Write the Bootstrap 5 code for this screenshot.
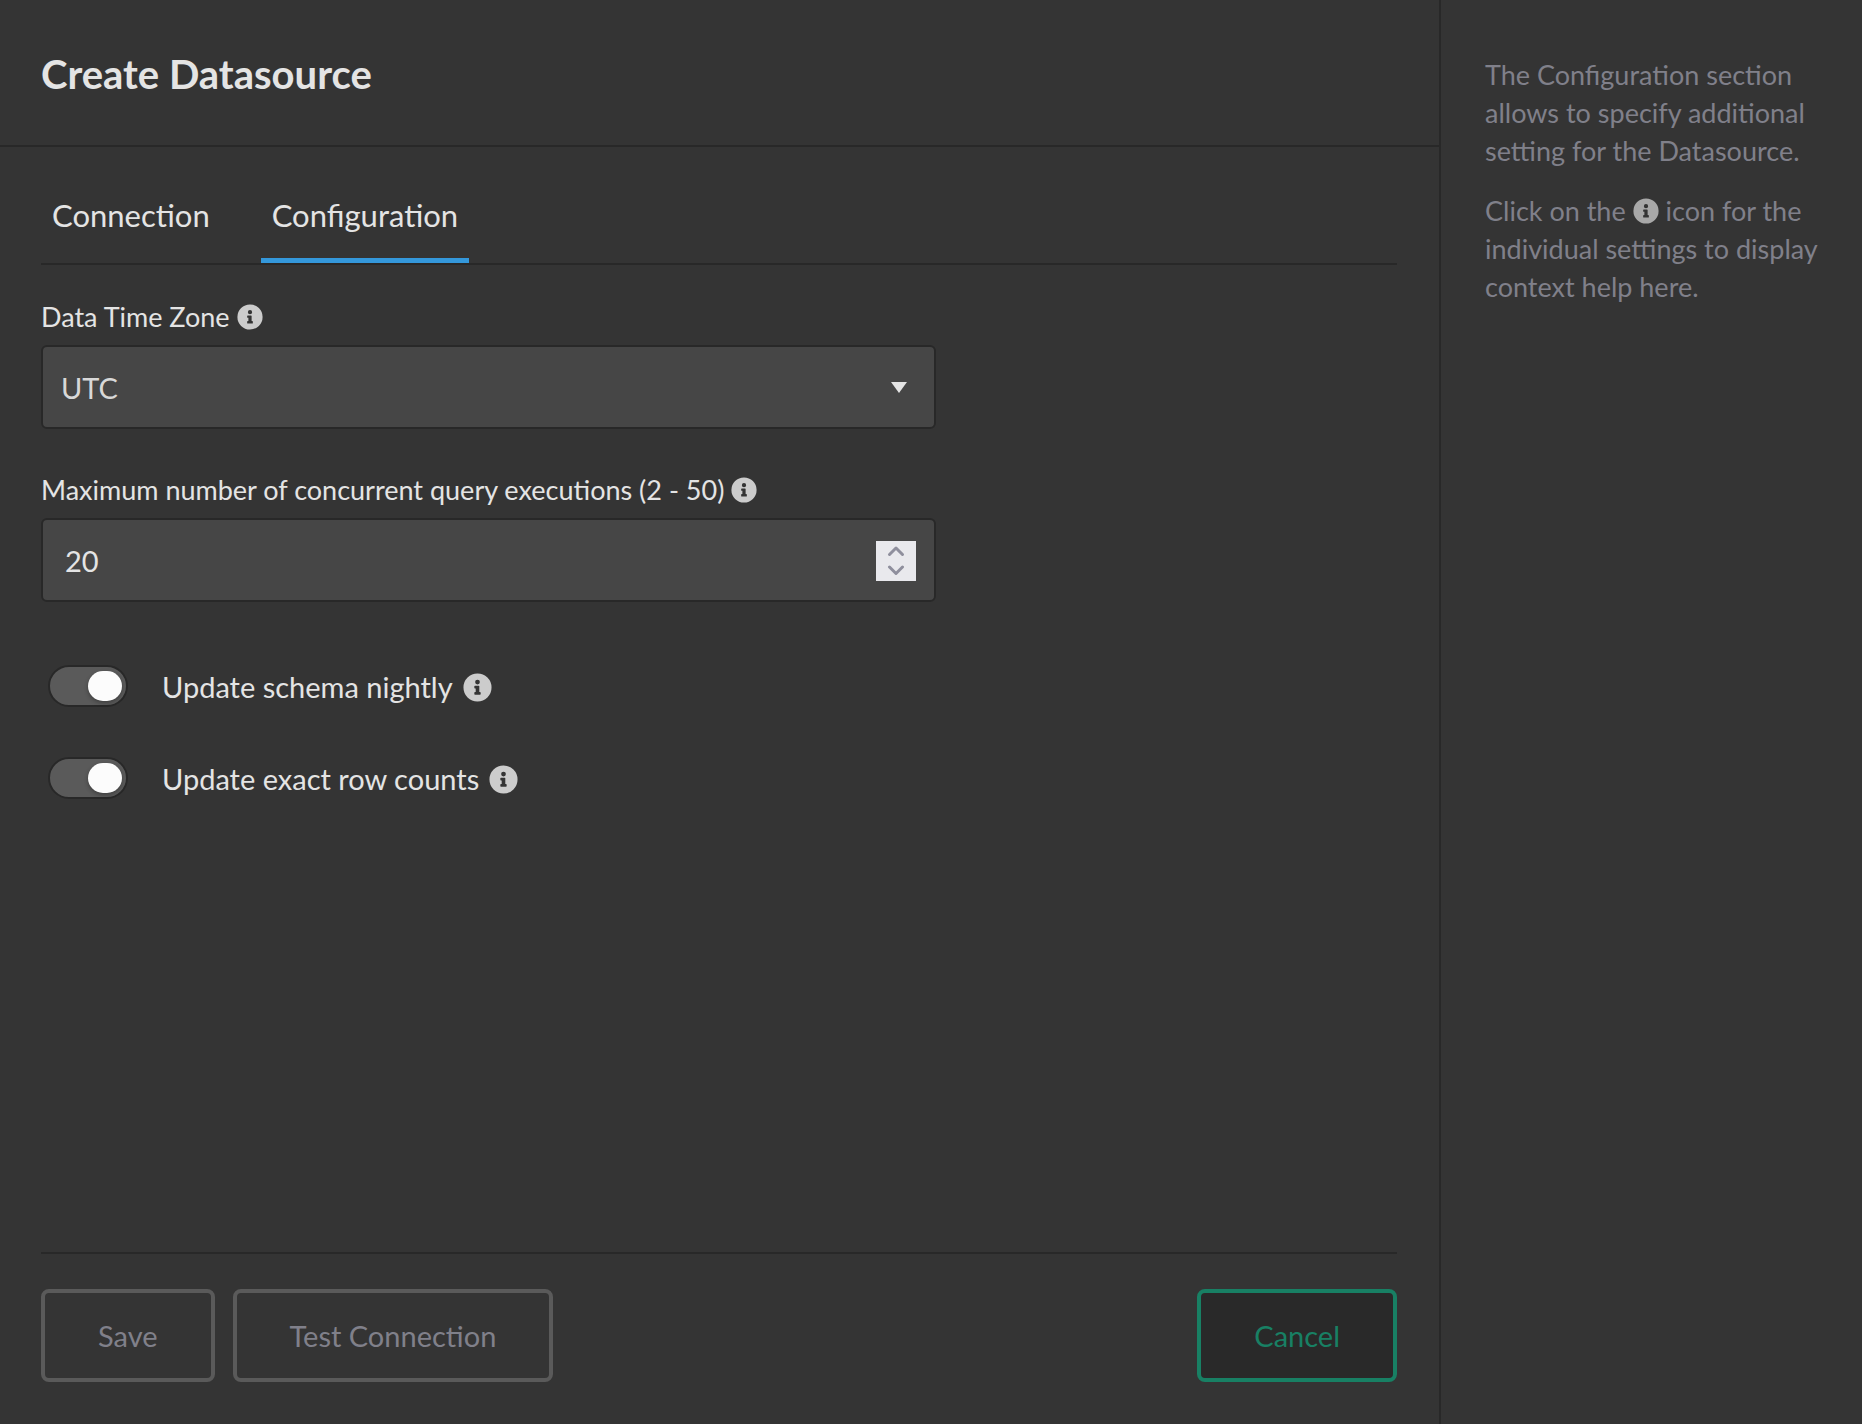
<!DOCTYPE html>
<html lang="en">
<head>
<meta charset="utf-8">
<meta name="viewport" content="width=device-width, initial-scale=1">
<title>Create Datasource</title>
<link href="https://cdn.jsdelivr.net/npm/bootstrap@5.3.0/dist/css/bootstrap.min.css" rel="stylesheet">
<style>
  :root { --ds-bg: #343434; --ds-line: #282828; --ds-text: #e4e4e4; --ds-muted: #80808a; --ds-field: #464646; }
  body { background: var(--ds-bg); color: var(--ds-text); font-family: Lato, sans-serif; font-size: 27px; line-height: 38px; }
  .ds-header { border-bottom: 2px solid var(--ds-line); padding: 49px 41px 46px; }
  .ds-title { font-size: 40px; line-height: 50px; font-weight: 700; }
  .ds-body { padding: 40px 42px 40px 41px; }
  .ds-tabs { border-bottom: 2px solid var(--ds-line); gap: 40px; }
  .ds-tabs .nav-link { border: 0; border-bottom: 5px solid transparent; border-radius: 0; margin: 0; padding: 8px 11px 23px; font-size: 31px; line-height: 40px; color: var(--ds-text); background: none; }
  .ds-tabs .nav-link.active { color: var(--ds-text); background: none; border-bottom-color: #3498db; }
  .ds-form { width: 66%; padding-top: 33px; }
  .ds-label { display: block; margin-bottom: 9px; }
  .ds-field { height: 84px; background-color: var(--ds-field); border: 2px solid var(--ds-line); border-radius: 6px; margin-bottom: 42px; font-size: 29px; color: #d8d8d8; }
  select.ds-field { padding: 2px 18px 0; background-image: url("data:image/svg+xml,%3Csvg xmlns='http://www.w3.org/2000/svg' viewBox='0 0 16 11'%3E%3Cpath fill='%23e4e4e4' d='M0 0h16L8 11z'/%3E%3C/svg%3E"); background-size: 16px 11px; background-position: right 27px center; }
  .ds-number { padding: 2px 18px 0 22px; }
  .ds-number input { border: 0; background: none; color: var(--ds-text); outline: 0; min-width: 0; padding: 0; appearance: textfield; }
  .ds-number input::-webkit-inner-spin-button { display: none; }
  .ds-spin { width: 40px; height: 40px; background: #e9e9ed; }
  .ds-spin button { border: 0; background: none; padding: 0; height: 20px; line-height: 0; }
  .ds-spin path { fill: none; stroke: #8f8f9d; stroke-width: 3; stroke-linecap: round; stroke-linejoin: round; }
  .ds-icon { width: 26px; height: 26px; vertical-align: -3px; fill: #cccccc; }
  .ds-switches { padding: 21px 0 0 7px; }
  .ds-switch { gap: 34px; height: 42px; margin-bottom: 50px; font-size: 29px; }
  .ds-switch label { padding-top: 2px; }
  .ds-switch .ds-icon { width: 29px; height: 29px; margin-left: 10px; vertical-align: -4px; }
  .ds-switch .form-check-input { width: 80px; height: 42px; margin: 0; border: 2px solid var(--ds-line); background: #5a5a5a; border-radius: 21px; display: flex; align-items: center; justify-content: flex-end; padding-right: 4px; }
  .ds-switch .form-check-input::before { content: ""; width: 34px; height: 30px; border-radius: 15px; background: #fcfcfc; box-shadow: 0 2px 4px rgba(0,0,0,.3); }
  .ds-footer { margin: 0 42px 42px 41px; padding-top: 35px; border-top: 2px solid var(--ds-line); gap: 18px; }
  .ds-btn { border: 4px solid #5a5a5a; border-radius: 8px; padding: 23px 53px 22px; font-size: 29px; line-height: 40px; color: var(--ds-muted); background: var(--ds-bg); }
  .ds-cancel { border-color: #188064; color: #188064; background: #292929; }
  .ds-help { flex: 0 0 423px; border-left: 2px solid var(--ds-line); padding: 56px 40px 56px 44px; color: var(--ds-muted); }
  .ds-help p { margin-bottom: 22px; }
  .ds-help .ds-icon { fill: #a8a8a8; }
</style>
<script src="https://cdn.jsdelivr.net/npm/bootstrap@5.3.0/dist/js/bootstrap.bundle.min.js"></script>
</head>
<body>
<svg class="d-none" aria-hidden="true">
  <symbol id="info" viewBox="0 0 512 512"><path d="M256 8a248 248 0 1 0 0 496 248 248 0 0 0 0-496zm0 110a42 42 0 1 1 0 84 42 42 0 0 1 0-84zm56 254a12 12 0 0 1-12 12h-88a12 12 0 0 1-12-12v-24a12 12 0 0 1 12-12h12v-64h-12a12 12 0 0 1-12-12v-24a12 12 0 0 1 12-12h64a12 12 0 0 1 12 12v100h12a12 12 0 0 1 12 12z"/></symbol>
</svg>
<div class="d-flex min-vh-100">
  <main class="d-flex flex-column flex-grow-1">
    <header class="ds-header"><h1 class="ds-title m-0">Create Datasource</h1></header>
    <div class="ds-body flex-grow-1">
      <ul class="nav nav-tabs ds-tabs" role="tablist">
        <li class="nav-item" role="presentation"><button class="nav-link" type="button" role="tab" aria-selected="false">Connection</button></li>
        <li class="nav-item" role="presentation"><button class="nav-link active" type="button" role="tab" aria-selected="true">Configuration</button></li>
      </ul>
      <form class="ds-form">
        <label class="ds-label" for="tz">Data Time Zone <svg class="ds-icon"><use href="#info"/></svg></label>
        <select class="form-select ds-field" id="tz"><option>UTC</option></select>
        <label class="ds-label" for="maxq">Maximum number of concurrent query executions (2 - 50) <svg class="ds-icon"><use href="#info"/></svg></label>
        <div class="ds-field ds-number d-flex align-items-center">
          <input class="flex-grow-1" id="maxq" type="number" min="2" max="50" value="20">
          <div class="ds-spin d-flex flex-column">
            <button type="button" aria-label="Increase"><svg width="18" height="12" viewBox="0 0 18 12"><path d="M2.500 9.500 9 3 15.500 9.500"/></svg></button>
            <button type="button" aria-label="Decrease"><svg width="18" height="12" viewBox="0 0 18 12"><path d="M2.500 2 9 8.500 15.500 2"/></svg></button>
          </div>
        </div>
        <div class="ds-switches">
          <div class="ds-switch d-flex align-items-center">
            <input class="form-check-input" type="checkbox" role="switch" id="nightly" checked>
            <label for="nightly">Update schema nightly<svg class="ds-icon"><use href="#info"/></svg></label>
          </div>
          <div class="ds-switch d-flex align-items-center">
            <input class="form-check-input" type="checkbox" role="switch" id="rows" checked>
            <label for="rows">Update exact row counts<svg class="ds-icon"><use href="#info"/></svg></label>
          </div>
        </div>
      </form>
    </div>
    <footer class="ds-footer d-flex">
      <button class="btn ds-btn" type="button">Save</button>
      <button class="btn ds-btn" type="button">Test Connection</button>
      <button class="btn ds-btn ds-cancel ms-auto" type="button">Cancel</button>
    </footer>
  </main>
  <aside class="ds-help">
    <p>The Configuration section allows to specify additional setting for the Datasource.</p>
    <p>Click on the <svg class="ds-icon"><use href="#info"/></svg> icon for the individual settings to display context help here.</p>
  </aside>
</div>
</body>
</html>
